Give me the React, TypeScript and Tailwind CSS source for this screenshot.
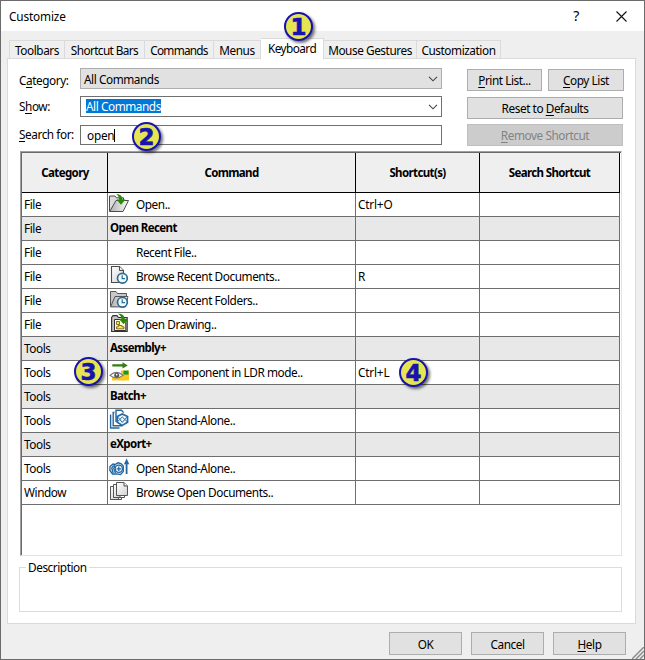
import React from "react";

type IconName = "open" | "doc" | "folder" | "drawing" | "ldr" | "batch" | "export" | "windows";

function Clock() {
  return (
    <g>
      <circle cx="13.4" cy="12.2" r="4.9" fill="#f3f9fc" stroke="#2a6d92" strokeWidth="1.7" />
      <path d="M13.2 9.2V12.6H16" fill="none" stroke="#2a6d92" strokeWidth="1.2" />
    </g>
  );
}

function Icon({ name }: { name: IconName }) {
  return (
    <svg width="20" height="20" viewBox="0 0 20 20" className="block shrink-0 overflow-visible">
      <defs>
        <linearGradient id="paper" x1="0" y1="0" x2="1" y2="1">
          <stop offset="0" stopColor="#ffffff" />
          <stop offset="1" stopColor="#d2d2d2" />
        </linearGradient>
        <linearGradient id="flap" x1="0" y1="0" x2="1" y2="0">
          <stop offset="0" stopColor="#b0b0b0" />
          <stop offset="1" stopColor="#fafafa" />
        </linearGradient>
      </defs>
      {name === "open" && (
        <g>
          <path d="M.5 17.5V2H6L7.5 3.8H14.5V8" fill="#dcdcdc" stroke="#4a4a4a" />
          <path d="M.7 17.5L7 6.5H19.5L14 17.5Z" fill="url(#flap)" stroke="#4a4a4a" />
          <path d="M7.2 .2C11 -.2 13.4 2 13.5 5.5H16.5L12 10.8L7.5 5.5H10.2C10.2 3.2 9.2 1.6 7.2 .2Z" fill="#298a06" />
        </g>
      )}
      {name === "doc" && (
        <g>
          <path d="M2.5 .5H10.5L14.5 4.5V16.5H2.5Z" fill="url(#paper)" stroke="#4a4a4a" strokeWidth="1.1" />
          <path d="M10.5 .5V4.5H14.5" fill="#eee" stroke="#4a4a4a" />
          <Clock />
        </g>
      )}
      {name === "folder" && (
        <g>
          <path d="M1.5 16.5V1.5H7L8.5 3.5H17.5V8" fill="#c8c8c8" stroke="#555" />
          <path d="M1.5 16.9L6 6.5H19L16.5 16.9Z" fill="url(#flap)" stroke="#555" />
          <Clock />
        </g>
      )}
      {name === "drawing" && (
        <g>
          <path d="M2.6 17.5V3.5L4 1.6H8L9.4 3.5H18.2V17.5Z" fill="#c4c4c4" stroke="#333" strokeWidth="1.1" />
          <path d="M5.5 16.5V5.5H16.8V16.5Z" fill="#fffbe0" stroke="#333" />
          <path d="M7.5 7.5H10.5V10.5H7.5Z" fill="#ffe45c" stroke="#6b5000" strokeWidth=".8" />
          <path d="M7.5 14.8V12.8H9.2V11.5H13V12.8H15V14.8Z" fill="#ffe45c" stroke="#6b5000" strokeWidth=".8" />
          <path d="M8.7 -.3C13 -.5 15.6 1.4 15.8 5H19L14.6 10.2L10 5H12.4C12.4 2.6 11.4 1 8.7 -.3Z" fill="#298a06" />
        </g>
      )}
      {name === "ldr" && (
        <g>
          <path d="M3.3 2.2H13.5V.2L18.8 3.4L13.5 6.6V4.6H3.3Z" fill="#347c15" />
          <path d="M12 8.6H20V18.6H3V14.5H12Z" fill="#fbc91d" />
          <path d="M14.4 8.6H19.5V12.6H14.4Z" fill="#16983a" />
          <path d="M1 13.4Q7.5 7.2 14 13.4Q7.5 18.6 1 13.4Z" fill="#fff" stroke="#777" strokeWidth="1.2" />
          <circle cx="7.7" cy="13.2" r="2.5" fill="#555" />
          <circle cx="7.7" cy="12.6" r=".9" fill="#fff" />
        </g>
      )}
      {name === "batch" && (
        <g fill="none" stroke="#2367a0" strokeWidth="1.4">
          <path d="M1.6 4.5V18H10.5M5.5 2.5H4.2V15.8H13.5M7 12V.3H12.5L14.6 2.6" />
          <path d="M13.3 4L18.6 6.6V12.2L13.3 15.4L8.2 12.2V6.6Z" fill="#eaf5fc" strokeWidth="1.6" />
          <path d="M8.2 12.2L10.8 9.4L8.2 6.6M18.6 12.2L15.9 9.4L18.6 6.6M10.8 9.4L13.3 12.4L15.9 9.4L13.3 7Z" strokeWidth="1" />
        </g>
      )}
      {name === "export" && (
        <g fill="none" stroke="#2367a0" strokeWidth="1.3">
          <path d="M1 8.5L4 6L6 6.5L9 4.8L12 5.5L14.3 8V13.5L11.5 16.6L7.5 15.8L3.5 16L.9 12.5Z" fill="#d5eaf7" />
          <circle cx="9.8" cy="10.8" r="3.6" fill="#f3faff" />
          <path d="M4.5 7.5L2.8 10L4.2 15M6 6.5L4.8 10.5L6.5 15M7.6 10.8H12M9.8 8.6V13" />
          <path d="M17.6 16V5" strokeWidth="1.8" />
          <path d="M14.9 6.2L17.6 .5L20.3 6.2Z" fill="#2367a0" stroke="none" />
        </g>
      )}
      {name === "windows" && (
        <g fill="url(#paper)" stroke="#555" strokeWidth="1">
          <path d="M1.5 4.5H9.5V17.5H1.5Z" />
          <path d="M1.5 17.5H12.5V15.5" fill="none" />
          <path d="M4.5 2.5H11V15.5H4.5Z" />
          <path d="M4.5 15.5H15.5V13.5" fill="none" />
          <path d="M7.5 .5H15L18.5 4V13.5H7.5Z" />
          <path d="M15 .5V4H18.5" />
        </g>
      )}
    </svg>
  );
}

function Badge({ n, place }: { n: number; place: string }) {
  return (
    <div
      className={`absolute z-10 flex size-[29px] items-center justify-center rounded-full border-2 border-[#1712b0] bg-[#e5e552] pt-px font-['DejaVu_Sans',sans-serif] text-[23px] leading-none font-bold tracking-normal text-[#1712b0] shadow-[2px_2px_3px_rgba(0,0,0,0.55)] [-webkit-text-stroke:0.6px_#1712b0] ${place}`}
    >
      {n}
    </div>
  );
}

const U = ({ children }: { children: string }) => (
  <span className="underline decoration-1 underline-offset-2">{children}</span>
);

const tabs = [
  { label: "Toolbars", box: "w-[56px] border-l" },
  { label: "Shortcut Bars", box: "w-[80px] tracking-[-0.6px]" },
  { label: "Commands", box: "w-[69px] tracking-[-0.75px]" },
  { label: "Menus", box: "w-[47px]" },
  { label: "Keyboard", box: "w-[63px] tracking-[-0.55px]", selected: true },
  { label: "Mouse Gestures", box: "w-[93px]" },
  { label: "Customization", box: "w-[84px]" },
];

type Row = { cat: string; cmd: string; icon?: IconName; key?: string; group?: boolean };

const rows: Row[] = [
  { cat: "File", cmd: "Open..", icon: "open", key: "Ctrl+O" },
  { cat: "File", cmd: "Open Recent", group: true },
  { cat: "File", cmd: "Recent File.." },
  { cat: "File", cmd: "Browse Recent Documents..", icon: "doc", key: "R" },
  { cat: "File", cmd: "Browse Recent Folders..", icon: "folder" },
  { cat: "File", cmd: "Open Drawing..", icon: "drawing" },
  { cat: "Tools", cmd: "Assembly+", group: true },
  { cat: "Tools", cmd: "Open Component in LDR mode..", icon: "ldr", key: "Ctrl+L" },
  { cat: "Tools", cmd: "Batch+", group: true },
  { cat: "Tools", cmd: "Open Stand-Alone..", icon: "batch" },
  { cat: "Tools", cmd: "eXport+", group: true },
  { cat: "Tools", cmd: "Open Stand-Alone..", icon: "export" },
  { cat: "Window", cmd: "Browse Open Documents..", icon: "windows" },
];

const Chevron = () => (
  <svg width="10" height="6" viewBox="0 0 10 6" className="block">
    <path d="M1 .8L5 4.8L9 .8" fill="none" stroke="#444" strokeWidth="1.1" />
  </svg>
);

const button = "flex items-center justify-center border border-[#adadad] bg-[#e1e1e1]";

export default function App() {
  return (
    <div className="relative flex h-[660px] w-[645px] flex-col overflow-hidden border border-[#6b6b6b] bg-[#efefef] font-['Noto_Sans','Open_Sans',sans-serif] text-[11.8px] leading-4 tracking-[-0.44px] whitespace-nowrap text-black">
      <header className="flex h-[30px] shrink-0 items-center bg-white pl-2">
        <span className="tracking-[-0.15px]">Customize</span>
        <span className="mr-[37px] ml-auto text-[14px]">?</span>
        <svg width="11" height="11" viewBox="0 0 11 11" className="mr-[17px]">
          <path d="M.5 .5L10.5 10.5M10.5 .5L.5 10.5" stroke="#111" strokeWidth="1.1" />
        </svg>
      </header>

      <nav className="z-[1] -mb-px flex h-[28px] shrink-0 items-end pl-2">
        {tabs.map((t) => (
          <div
            key={t.label}
            className={`flex justify-center border-[#dadada] ${t.box} ${
              t.selected ? "h-[21px] border-t border-r bg-white pt-px" : "h-[19px] border-t border-r border-b pt-px"
            }`}
          >
            {t.label}
          </div>
        ))}
      </nav>

      <main className="ml-[6px] flex h-[566px] w-[629px] shrink-0 flex-col border border-[#dadada] bg-white">
        <section className="flex h-[92px] shrink-0 pl-[11px]">
          <div className="flex w-[61px] flex-col pt-[13px]">
            <span className="h-[26px]">C<U>a</U>tegory:</span>
            <span className="h-[28px]">S<U>h</U>ow:</span>
            <span><U>S</U>earch for:</span>
          </div>
          <div className="flex w-[362px] flex-col pt-[9px]">
            <div className="flex h-[21px] items-center justify-between border border-[#adadad] bg-[#e1e1e1] pr-[3px] pl-[3px]">
              <span>All Commands</span>
              <Chevron />
            </div>
            <div className="mt-[7px] flex h-[21px] items-center justify-between border border-[#707070] pr-[3px] pl-[5px]">
              <span className="-mt-px h-[14px] bg-[#0078d7] leading-[14px] text-white">All Commands</span>
              <Chevron />
            </div>
            <div className="mt-2 flex h-5 items-center border border-[#707070] pl-[6px]">
              <span className="tracking-[-0.25px]">open</span>
              <span className="h-[13px] w-px bg-black" />
            </div>
          </div>
          <div className="ml-[25px] flex w-[157px] flex-col pt-[10px]">
            <div className="flex justify-between">
              <div className={`${button} h-[22px] w-[75px]`}><span><U>P</U>rint List...</span></div>
              <div className={`${button} h-[22px] w-[76px]`}><span><U>C</U>opy List</span></div>
            </div>
            <div className={`${button} mt-[6px] h-[22px] w-[156px]`}><span>Reset to <U>D</U>efaults</span></div>
            <div className="mt-[5px] flex h-[22px] w-[156px] items-center justify-center border border-[#bfbfbf] bg-[#cccccc] text-[#838383]">
              <span><U>R</U>emove Shortcut</span>
            </div>
          </div>
        </section>

        <section className="ml-3 h-[405px] w-[602px] shrink-0 border border-[#a0a0a0] border-r-[#e3e3e3] border-b-[#e3e3e3]">
          <div className="h-full border-t border-l border-[#696969]">
            <div className="flex h-10 w-[598px] border-b border-black bg-[#efefef] text-[11.5px] font-bold tracking-[-0.63px]">
              <div className="flex w-[86px] items-center justify-center border-r border-black pl-px">Category</div>
              <div className="flex w-[248px] items-center justify-center border-r border-black">Command</div>
              <div className="flex w-[124px] items-center justify-center border-r border-black">Shortcut(s)</div>
              <div className="flex w-[140px] items-center justify-center border-r border-black">Search Shortcut</div>
            </div>
            {rows.map((r, i) => (
              <div
                key={i}
                className={`flex h-6 w-[598px] border-b border-[#6e6e6e] *:flex *:items-center *:border-r *:border-[#6e6e6e] *:pb-px ${r.group ? "bg-[#e8e8e8]" : "bg-white"}`}
              >
                <div className="w-[86px] pl-[2px]">{r.cat}</div>
                {r.group ? (
                  <div className="w-[248px] pl-[2px] text-[11.5px] font-bold tracking-[-0.6px]">{r.cmd}</div>
                ) : (
                  <div className="w-[248px] pl-px">
                    <div className="w-[27px]">{r.icon && <Icon name={r.icon} />}</div>
                    {r.cmd}
                  </div>
                )}
                <div className="w-[124px] pl-[2px] tracking-[-0.2px]">{r.key}</div>
                <div className="w-[140px]" />
              </div>
            ))}
          </div>
        </section>

        <fieldset className="mt-[3px] ml-[11px] h-[53px] w-[603px] border border-[#dcdcdc] pl-[6px]">
          <legend className="px-[2px] leading-[17px]">Description</legend>
        </fieldset>
      </main>

      <footer className="mt-2 flex gap-[9px] pl-[388px]">
        <div className={`${button} h-[23px] w-[73px]`}>OK</div>
        <div className={`${button} h-[23px] w-[73px]`}>Cancel</div>
        <div className={`${button} h-[23px] w-[73px]`}><span><U>H</U>elp</span></div>
      </footer>

      <svg width="12" height="12" viewBox="0 0 12 12" className="absolute right-0 bottom-0">
        <path d="M0 12L12 0M4 12L12 4M8 12L12 8" stroke="#8d8d8d" strokeWidth="1.5" />
      </svg>
      <Badge n={1} place="top-[11px] left-[283px]" />
      <Badge n={2} place="top-[121px] left-[131px]" />
      <Badge n={3} place="top-[356px] left-[73px]" />
      <Badge n={4} place="top-[357px] left-[398px]" />
    </div>
  );
}
